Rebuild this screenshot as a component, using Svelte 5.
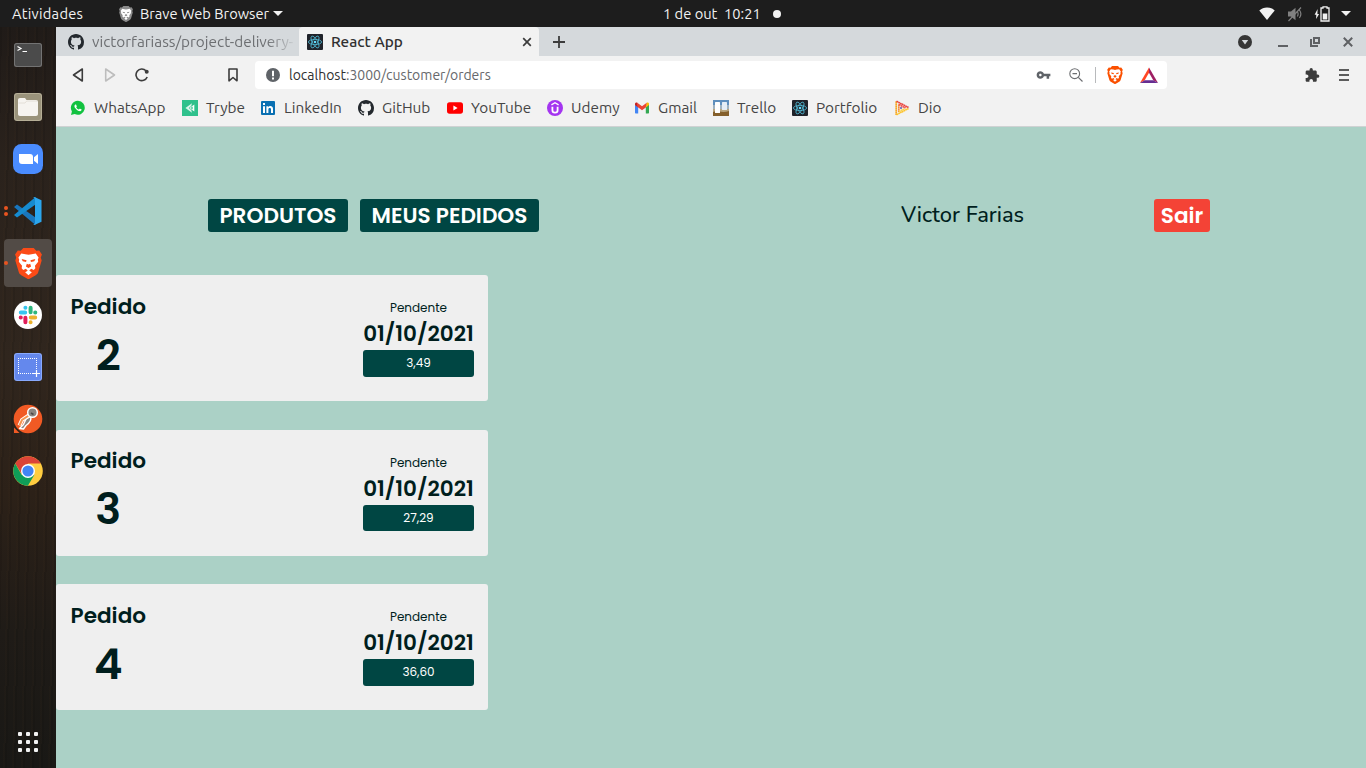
<script>
  const bookmarks = [
    { id: 'whatsapp', label: 'WhatsApp', width: 72 },
    { id: 'trybe', label: 'Trybe', width: 38 },
    { id: 'linkedin', label: 'LinkedIn', width: 58 },
    { id: 'github', label: 'GitHub', width: 49 },
    { id: 'youtube', label: 'YouTube', width: 60 },
    { id: 'udemy', label: 'Udemy', width: 47 },
    { id: 'gmail', label: 'Gmail', width: 39 },
    { id: 'trello', label: 'Trello', width: 39 },
    { id: 'react', label: 'Portfolio', width: 62 },
    { id: 'dio', label: 'Dio', width: 24 },
  ];

  const dock = [
    { id: 'terminal', windows: 0 },
    { id: 'files', windows: 0 },
    { id: 'zoom', windows: 0 },
    { id: 'vscode', windows: 2 },
    { id: 'brave', windows: 1, active: true },
    { id: 'slack', windows: 0 },
    { id: 'screenshot', windows: 0 },
    { id: 'postman', windows: 0 },
    { id: 'chrome', windows: 0 },
  ];

  const orders = [
    { id: 2, status: 'Pendente', date: '01/10/2021', total: '3,49' },
    { id: 3, status: 'Pendente', date: '01/10/2021', total: '27,29' },
    { id: 4, status: 'Pendente', date: '01/10/2021', total: '36,60' },
  ];

  const dots = [0, 1, 2, 3, 4, 5, 6, 7, 8];
</script>

{#snippet favicon(id)}
  <svg width="16" height="16" viewBox="0 0 16 16">
    {#if id === 'whatsapp'}
      <path d="M8 .8a7 7 0 0 0-6.1 10.6L1 15l3.7-.9A7 7 0 1 0 8 .8z" fill="#12c240" />
      <g transform="translate(.9 .8) scale(.59)"><path fill="#fff" d="M17.472 14.382c-.297-.149-1.758-.867-2.03-.967-.273-.099-.471-.148-.67.15-.197.297-.767.966-.94 1.164-.173.199-.347.223-.644.075-.297-.15-1.255-.463-2.39-1.475-.883-.788-1.48-1.761-1.653-2.059-.173-.297-.018-.458.13-.606.134-.133.298-.347.446-.52.149-.174.198-.298.298-.497.099-.198.05-.371-.025-.52-.075-.149-.669-1.612-.916-2.207-.242-.579-.487-.5-.669-.51-.173-.008-.371-.01-.57-.01-.198 0-.52.074-.792.372-.272.297-1.04 1.016-1.04 2.479 0 1.462 1.065 2.875 1.213 3.074.149.198 2.096 3.2 5.077 4.487.709.306 1.262.489 1.694.625.712.227 1.36.195 1.871.118.571-.085 1.758-.719 2.006-1.413.248-.694.248-1.289.173-1.413-.074-.124-.272-.198-.57-.347" /></g>
    {:else if id === 'trybe'}
      <rect width="16" height="16" fill="#2fc18c" />
      <path d="M3.400 8 10 3.200 9.200 6 6.800 8l2.400 2 .8 2.800z" fill="#d9f4ea" />
      <path d="M7.500 8 12.300 4.400v7.200z" fill="#fff" />
      <path d="m8.600 8 2-1.500v3z" fill="#2fc18c" />
    {:else if id === 'linkedin'}
      <rect x="1" y="1" width="14" height="14" rx="1" fill="#0a70b2" />
      <path d="M3 6.200h2V13H3zM3 3h2v2H3zM6.400 6.200h1.900v1c.9-1.700 4.700-1.800 4.700 1.600V13h-2V9.400c0-2-2.600-1.800-2.600 0V13h-2z" fill="#fff" />
    {:else if id === 'github'}
      <path fill="#24292e" fill-rule="evenodd" d="M8 0C3.58 0 0 3.58 0 8c0 3.54 2.29 6.53 5.47 7.59.4.07.55-.17.55-.38 0-.19-.01-.82-.01-1.49-2.01.37-2.53-.49-2.69-.94-.09-.23-.48-.94-.82-1.13-.28-.15-.68-.52-.01-.53.63-.01 1.08.58 1.23.82.72 1.21 1.87.87 2.33.66.07-.52.28-.87.51-1.07-1.78-.2-3.64-.89-3.64-3.95 0-.87.31-1.59.82-2.15-.08-.2-.36-1.02.08-2.12 0 0 .67-.21 2.2.82.64-.18 1.32-.27 2-.27s1.36.09 2 .27c1.53-1.04 2.2-.82 2.2-.82.44 1.1.16 1.92.08 2.12.51.56.82 1.27.82 2.15 0 3.07-1.87 3.75-3.65 3.95.29.25.54.73.54 1.48 0 1.07-.01 1.93-.01 2.2 0 .21.15.46.55.38A8.01 8.01 0 0 0 16 8c0-4.42-3.58-8-8-8z" />
    {:else if id === 'youtube'}
      <rect y="2.300" width="16" height="11.400" rx="2.600" fill="#f00" />
      <path d="M6.400 5.600v4.800L10.600 8z" fill="#fff" />
    {:else if id === 'udemy'}
      <circle cx="8" cy="8" r="8" fill="#a435f0" />
      <path d="M5.400 6.800v3.400c0 3.200 5.200 3.200 5.200 0V6.800" fill="none" stroke="#fff" stroke-width="1.800" />
      <path d="M4.400 4.800 8 2.700l3.600 2.100" fill="none" stroke="#fff" stroke-width="1.400" />
    {:else if id === 'gmail'}
      <path d="M1 4v8.500c0 .6.400 1 1 1h2.200V6.800z" fill="#4285f4" />
      <path d="M15 4v8.500c0 .6-.4 1-1 1h-2.200V6.800z" fill="#34a853" />
      <path d="M1 5V4c0-1.500 1.500-1.900 2.600-1.100L4.200 7.500z" fill="#c5221f" />
      <path d="M15 5V4c0-1.500-1.500-1.900-2.600-1.100l-.6 4.600z" fill="#fbbc04" />
      <path d="M3.300 2.800 8 6.300l4.700-3.500-.9 4.600L8 10.300 3.300 6.800z" fill="#ea4335" />
    {:else if id === 'trello'}
      <rect width="16" height="16" fill="#b7a47e" />
      <rect width="16" height="5" fill="#5f8fbd" />
      <rect y="5" width="16" height="4" fill="#9fb2c0" />
      <path d="M0 12c4-2 9 1.500 16-1v5H0z" fill="#85602c" />
      <rect x="2" y="2" width="5" height="11" rx=".5" fill="#fff" />
      <rect x="9" y="2" width="5" height="8" rx=".5" fill="#e5edf5" />
    {:else if id === 'react'}
      <rect width="16" height="16" rx="1" fill="#20232a" />
      <g fill="none" stroke="#4fb5cf" stroke-width=".85">
        <ellipse cx="8" cy="8" rx="6.600" ry="2.600" />
        <ellipse cx="8" cy="8" rx="6.600" ry="2.600" transform="rotate(60 8 8)" />
        <ellipse cx="8" cy="8" rx="6.600" ry="2.600" transform="rotate(120 8 8)" />
      </g>
      <circle cx="8" cy="8" r="1.300" fill="#61dafb" />
    {:else if id === 'dio'}
      <g fill="none" stroke-width="1.700" stroke-dasharray="1.700 .3">
        <path d="M2.200 15V1" stroke="#f5a623" />
        <path d="m2.500 1.300 12 6.200" stroke="#e8413b" />
        <path d="m2.500 14.700 12-6.200" stroke="#fdc32d" />
        <path d="M4.800 12V4" stroke="#f58b3c" />
        <path d="m5 4.500 6.500 3.500" stroke="#f0524f" />
        <path d="m5 11.800 5.500-3" stroke="#fbd14b" />
      </g>
      <circle cx="7" cy="8" r="1" fill="#5b59a8" />
    {/if}
  </svg>
{/snippet}

{#snippet lion(size, shield, face)}
  <svg width={size} height={size} viewBox="0 0 24 24">
    <path d="M8 0h8l2 2.200 2.300-.2L22.400 5l-.9 2.400.7 2.200-2.700 9.100c-.3 1-1 1.700-1.900 2.300L12 24.300 6.400 21c-.9-.6-1.600-1.300-1.900-2.300L1.800 9.600l.7-2.200L1.600 5l2.100-3L6 2.200z" fill={shield} />
    <path d="m12 5.300 2.400-.5 3.200-.5 2.200 3-.6 1.700.3 1.600-2.500 3.200.3 1.800-1.200 1.500-2.100-1-1.400 1.500 2 1.200-2.600 2.200-2.600-2.200 2-1.200L10 16.100l-2.100 1-1.200-1.500.3-1.800-2.500-3.200.3-1.600-.6-1.700 2.200-3 3.200.5z" fill={face} />
    <path d="m6.700 8.600 3.800.8-.4 1.500-2.600-.6zM17.300 8.600l-3.800.8.4 1.500 2.600-.6zM10.700 12.200 10 14.300l2 1.200 2-1.200-.7-2.100-1.300.5z" fill={shield} />
  </svg>
{/snippet}

{#snippet dockIcon(id)}
  <svg width="32" height="32" viewBox="0 0 32 32">
    {#if id === 'terminal'}
      <rect x="2" y="4" width="28" height="24" rx="2.500" fill="#737373" />
      <rect x="3" y="5" width="26" height="22" rx="2" fill="#4b4b4b" />
      <path d="m5.500 7.500 3.500 2-3.500 2M10.500 12.500h4.500" fill="none" stroke="#fff" stroke-width="1.200" />
    {:else if id === 'files'}
      <rect x="2" y="2" width="28" height="28" rx="3" fill="#b6af97" />
      <rect x="3" y="3" width="26" height="26" rx="2.500" fill="#9a937b" />
      <path d="M6 9c0-1.300.8-2 2-2h5l1.500 2H24c1.200 0 2 .8 2 2v12c0 1.200-.8 2-2 2H8c-1.200 0-2-.8-2-2z" fill="#f6f4f0" />
      <path d="M6.500 12H13l1.700-2H25.500" fill="none" stroke="#dfdbd1" stroke-width=".8" />
    {:else if id === 'zoom'}
      <rect x="1" y="1" width="30" height="30" rx="8.500" fill="#4a8cff" />
      <path d="M7 11h11c2 0 3 1.200 3 3v7H10c-2 0-3-1.200-3-3z" fill="#fff" />
      <path d="m22 14.300 4-3.300v10l-4-3.300z" fill="#fff" />
    {:else if id === 'vscode'}
      <path d="m2 12 3-2.500 18.500 13V30z" fill="#1976bd" />
      <path d="m2 20 3 2.500 18.500-13V2z" fill="#168bd0" />
      <path d="m22.500 2 7 3.200v21.600l-7 3.200-1.300-.8 1.800-.8V3.600l-1.800-.8z" fill="#2aa6ee" />
    {:else if id === 'slack'}
      <circle cx="16" cy="16" r="14" fill="#fff" />
      <g fill="none" stroke-width="4" stroke-linecap="round">
        <path d="M8.800 13.400h4.400M13.400 8.700v.1" stroke="#36c5f0" />
        <path d="M18.600 8.800v4.400M23.300 13.400h-.1" stroke="#2eb67d" />
        <path d="M23.200 18.600h-4.400M18.600 23.300v-.1" stroke="#ecb22e" />
        <path d="M13.400 23.200v-4.400M8.700 18.600h.1" stroke="#e01e5a" />
      </g>
    {:else if id === 'screenshot'}
      <rect x="2" y="2" width="28" height="28" rx="3" fill="#88a9fc" />
      <rect x="3" y="3" width="26" height="26" rx="2.500" fill="#6488ed" />
      <path d="M6 7.500h19M6 22.500h15" stroke="#fff" stroke-dasharray="1 1" />
      <path d="M6.500 9v13M24.500 9v9" stroke="#fff" stroke-dasharray="1 1" />
      <path d="M24.500 19v7M21 22.500h7" stroke="#fff" stroke-width="1.200" />
    {:else if id === 'postman'}
      <circle cx="16" cy="16" r="14.300" fill="#f15a24" />
      <path d="M2 24.500 7.500 30H2z" fill="#f15a24" />
      <path d="M18.500 13.500c1.500 4-1 6.500-4.500 9L11.500 26 7.500 25.500l4-4L14 16z" fill="#8d8781" stroke="#fff" stroke-width="1.400" stroke-linejoin="round" />
      <path d="m17.500 12-7.500 5-2.500 5.500" fill="none" stroke="#fff" stroke-width="4" />
      <path d="m17.500 12-7.500 5-2.500 5.500" fill="none" stroke="#f5954e" stroke-width="2" />
      <circle cx="20.500" cy="9.500" r="4.800" fill="#8b8580" stroke="#fff" stroke-width="1.500" />
      <path d="m19 10 2.500 1.500" stroke="#4e4a47" stroke-width="1.500" />
    {:else if id === 'chrome'}
      <circle cx="16" cy="16" r="14.800" fill="#ffcd40" />
      <path d="M3.200 8.600A14.800 14.800 0 0 1 28.800 8.600H16L10 19.400z" fill="#db4437" />
      <path d="M3.200 8.600A14.800 14.800 0 0 0 15.900 30.800L22.400 19.700H9.600z" fill="#0f9d58" />
      <circle cx="16" cy="16" r="7" fill="#fff" />
      <circle cx="16" cy="16" r="5.600" fill="#4285f4" />
    {/if}
  </svg>
{/snippet}

<div class="screen">
  <header class="topbar">
    <div class="top-left">
      <span class="activities">Atividades</span>
      <span class="app-menu">
        {@render lion(16, '#8b8b8b', '#fff')}
        <span class="app-name">Brave Web Browser</span>
        <svg width="10" height="5" viewBox="0 0 10 5"><path d="M0 0h10L5 5z" fill="#f2f2f2" /></svg>
      </span>
    </div>
    <div class="clock"><span>1 de out&nbsp; 10:21</span><i></i></div>
    <div class="tray">
      <svg width="16" height="14" viewBox="0 0 16 14"><path d="M.3 3.400C4.500-.5 11.500-.5 15.700 3.400L8 13z" fill="#f2f2f2" /></svg>
      <svg width="16" height="16" viewBox="0 0 16 16"><path d="M1 5.500h3L8.500 1.800v12.400L4 10.500H1z" fill="#818181" /><path d="M10.300 5.500c1 1.500 1 3.500 0 5M12.400 4c1.800 2.500 1.800 5.600 0 8M1.500 15 14 1.500" fill="none" stroke="#818181" stroke-width="1.200" /></svg>
      <svg width="16" height="16" viewBox="0 0 16 16"><path d="M3.600 3 .6 8.700h1.700L2.100 13l3-5H3.400z" fill="#f2f2f2" /><path d="M7 2h2V.9h4V2h2v13H7z" fill="none" stroke="#f2f2f2" stroke-width="1.300" /><path d="M8.700 7.500h4.600v6H8.700z" fill="#f2f2f2" /></svg>
      <svg width="10" height="5" viewBox="0 0 10 5"><path d="M0 0h10L5 5z" fill="#f2f2f2" /></svg>
    </div>
  </header>

  <div class="desktop">
    <aside class="dock">
      {#each dock as app (app.id)}
        <div class="dock-item" class:active={app.active}>
          <span class="marks">
            {#each dots.slice(0, app.windows) as d (d)}<i></i>{/each}
          </span>
          {#if app.id === 'brave'}
            {@render lion(31, '#fb4b17', '#fff')}
          {:else}
            {@render dockIcon(app.id)}
          {/if}
        </div>
      {/each}
      <div class="launcher">
        {#each dots as d (d)}<i></i>{/each}
      </div>
    </aside>

    <main class="browser">
      <div class="tabs">
        <div class="tab">
          {@render favicon('github')}
          <span class="tab-title fade">victorfariass/project-delivery-</span>
        </div>
        <div class="tab current">
          {@render favicon('react')}
          <span class="tab-title">React App</span>
          <svg width="10" height="10" viewBox="0 0 10 10"><path d="m1.200 1.200 7.600 7.600M8.800 1.200 1.200 8.800" stroke="#3c3c3c" stroke-width="1.700" /></svg>
        </div>
        <svg class="new-tab" width="12" height="12" viewBox="0 0 12 12"><path d="M6 0v12M0 6h12" stroke="#3c3c3c" stroke-width="1.800" /></svg>
        <div class="window-controls">
          <svg width="14" height="14" viewBox="0 0 14 14"><circle cx="7" cy="7" r="7" fill="#363636" /><path d="M3.800 5h6.400L7 9.500z" fill="#d5d9dc" /></svg>
          <svg width="10" height="14" viewBox="0 0 10 14"><path d="M0 11h10" stroke="#5f6164" stroke-width="2" /></svg>
          <svg width="10" height="10" viewBox="0 0 10 10"><path d="M4 1h5v5H4zM1 2v7h7" fill="none" stroke="#5f6164" stroke-width="2" /></svg>
          <svg width="10" height="10" viewBox="0 0 10 10"><path d="m.8.8 8.400 8.400M9.200.8.8 9.200" stroke="#5f6164" stroke-width="2" /></svg>
        </div>
      </div>

      <div class="toolbar">
        <div class="nav-icons">
          <svg width="12" height="14" viewBox="0 0 12 14"><path d="M10.300 1v12L1.500 7z" fill="none" stroke="#3c3c3c" stroke-width="1.600" stroke-linejoin="round" /></svg>
          <svg width="12" height="14" viewBox="0 0 12 14"><path d="M1.700 1v12L10.500 7z" fill="none" stroke="#bdbdbd" stroke-width="1.600" stroke-linejoin="round" /></svg>
          <svg class="reload" width="14" height="14" viewBox="0 0 14 14"><path d="M12.200 9A5.800 5.800 0 1 1 11 2.800" fill="none" stroke="#3c3c3c" stroke-width="1.600" /><circle cx="11.700" cy="3.700" r="2" fill="#3c3c3c" /></svg>
          <svg class="save" width="10" height="14" viewBox="0 0 10 14"><path d="M1 1h8v11.800L5 9.500l-4 3.300z" fill="none" stroke="#3c3c3c" stroke-width="1.600" stroke-linejoin="round" /></svg>
        </div>
        <div class="address">
          <svg width="14" height="14" viewBox="0 0 14 14"><circle cx="7" cy="7" r="7" fill="#5f6368" /><path d="M7 2.800v5.400M7 9.500v2" stroke="#fff" stroke-width="2" /></svg>
          <span class="url"><b>localhost</b>:3000/customer/orders</span>
          <div class="address-tools">
            <svg width="15" height="15" viewBox="0 1 24 24"><path fill="#5f6368" d="M12.650 10C11.830 7.670 9.610 6 7 6c-3.310 0-6 2.690-6 6s2.690 6 6 6c2.610 0 4.830-1.670 5.650-4H17v4h4v-4h2v-4H12.650zM7 14c-1.100 0-2-.9-2-2s.9-2 2-2 2 .9 2 2-.9 2-2 2z" /></svg>
            <svg width="14" height="14" viewBox="0 0 14 14"><circle cx="5.700" cy="5.700" r="4.900" fill="none" stroke="#6d6f72" stroke-width="1.100" /><path d="M3.500 5.700H8M9.300 9.300l4.200 4.200" stroke="#6d6f72" stroke-width="1.200" /></svg>
            <i class="divider"></i>
            {@render lion(18, '#fb5000', '#fff')}
            <svg width="18" height="16" viewBox="0 0 18 16"><path d="M9 .5 0 16l4.700-2.700L9 5.800z" fill="#ff4724" /><path d="m9 .5 9 15.500-4.700-2.700L9 5.800z" fill="#9e1f63" /><path d="M0 16h18l-4.700-2.700H4.700z" fill="#662d91" /></svg>
          </div>
        </div>
        <div class="toolbar-end">
          <svg width="15" height="15" viewBox="1 1 23 23"><path fill="#3c3c3c" d="M20.500 11H19V7c0-1.100-.9-2-2-2h-4V3.500a2.500 2.500 0 0 0-5 0V5H4c-1.100 0-1.990.9-1.990 2v3.800H3.500c1.490 0 2.700 1.210 2.700 2.700s-1.210 2.700-2.700 2.700H2V20c0 1.100.9 2 2 2h3.800v-1.500c0-1.490 1.210-2.700 2.700-2.700s2.700 1.210 2.700 2.700V22H17c1.100 0 2-.9 2-2v-4h1.500a2.500 2.500 0 0 0 0-5z" /></svg>
          <svg width="10" height="12" viewBox="0 0 10 12"><path d="M0 1h10M0 6h10M0 11h10" stroke="#5c5c5c" stroke-width="2" /></svg>
        </div>
      </div>

      <nav class="bookmarks">
        {#each bookmarks as mark (mark.id)}
          <a href="#{mark.id}">
            {@render favicon(mark.id)}
            <span style:width="{mark.width}px">{mark.label}</span>
          </a>
        {/each}
      </nav>

      <section class="page">
        <div class="page-header">
          <button class="nav-button products">PRODUTOS</button>
          <button class="nav-button my-orders">MEUS PEDIDOS</button>
          <span class="user">Victor Farias</span>
          <button class="nav-button logout">Sair</button>
        </div>
        <div class="orders">
          {#each orders as order (order.id)}
            <article class="order">
              <div class="order-id">
                <span class="caption">Pedido</span>
                <span class="number">{order.id}</span>
              </div>
              <div class="order-info">
                <span class="status">{order.status}</span>
                <span class="date">{order.date}</span>
                <span class="total">{order.total}</span>
              </div>
            </article>
          {/each}
        </div>
      </section>
    </main>
  </div>
</div>

<style>
  :global(body) {
    margin: 0;
    overflow: hidden;
  }
  svg {
    display: block;
    flex: none;
  }
  .screen {
    width: 1366px;
    height: 768px;
    display: flex;
    flex-direction: column;
    overflow: hidden;
    font-family: Ubuntu, 'Open Sans', sans-serif;
    font-size: 15.333px;
    white-space: nowrap;
  }

  .topbar {
    height: 27px;
    flex: none;
    display: grid;
    grid-template-columns: 663px 1fr auto;
    align-items: center;
    background: #1d1d1d;
    color: #f2f2f2;
    font-size: 14.667px;
  }
  .top-left,
  .app-menu,
  .clock,
  .tray {
    display: flex;
    align-items: center;
  }
  .activities {
    width: 106px;
    padding-left: 12px;
    letter-spacing: 0.250px;
  }
  .app-menu {
    gap: 5px;
  }
  .app-name {
    width: 128px;
    margin-left: 1px;
  }
  .clock span {
    width: 110px;
  }
  .clock i {
    width: 8px;
    height: 8px;
    border-radius: 50%;
    background: #f2f2f2;
  }
  .tray {
    gap: 12px;
    padding-right: 15px;
  }
  .tray svg:nth-child(3) {
    margin-right: -1px;
  }
  .tray svg:nth-child(2) {
    margin-right: -1px;
  }

  .desktop {
    flex: 1;
    display: flex;
    min-height: 0;
  }
  .dock {
    width: 56px;
    flex: none;
    display: flex;
    flex-direction: column;
    gap: 4px;
    padding: 4px;
    box-sizing: border-box;
    background:
      repeating-linear-gradient(91deg, rgba(0, 0, 0, 0.09) 0 2px, transparent 2px 7px, rgba(90, 60, 30, 0.05) 7px 9px),
      linear-gradient(#201b18, #2a221c 18%, #30261e 45%, #2c2118 63%, #1f1b17 82%, #191815);
  }
  .dock-item {
    position: relative;
    width: 48px;
    height: 48px;
    border-radius: 4px;
    display: flex;
    align-items: center;
    justify-content: center;
  }
  .dock-item.active {
    background: #524b46;
  }
  .marks {
    position: absolute;
    left: 0;
    top: 0;
    height: 100%;
    display: flex;
    flex-direction: column;
    justify-content: center;
    gap: 2px;
  }
  .marks i {
    width: 4px;
    height: 4px;
    border-radius: 50%;
    background: #e95420;
  }
  .launcher {
    margin: auto auto 12px;
    display: grid;
    grid-template-columns: repeat(3, 4px);
    gap: 4px;
  }
  .launcher i {
    height: 4px;
    border-radius: 1px;
    background: #f2f2f2;
  }

  .browser {
    flex: 1;
    min-width: 0;
    display: flex;
    flex-direction: column;
    background: #f2f2f2;
  }
  .tabs {
    height: 29px;
    flex: none;
    display: flex;
    align-items: center;
    background: #d5d9dc;
    color: #6d6f72;
  }
  .tab {
    width: 243px;
    height: 29px;
    box-sizing: border-box;
    padding-left: 12px;
    display: flex;
    align-items: center;
    gap: 8px;
  }
  .tab-title {
    flex: 1;
    overflow: hidden;
  }
  .fade {
    -webkit-mask-image: linear-gradient(90deg, #000 86%, transparent 101%);
    mask-image: linear-gradient(90deg, #000 86%, transparent 101%);
    margin-right: 4px;
  }
  .tab.current {
    width: 240px;
    padding: 0 7px 0 8px;
    border-radius: 4px 4px 0 0;
    background: #f2f2f2;
    color: #303030;
    font-weight: 500;
  }
  .new-tab {
    margin-left: 14px;
  }
  .window-controls {
    margin-left: auto;
    padding-right: 13px;
    display: flex;
    align-items: center;
  }
  .window-controls svg:nth-child(2) {
    margin-left: 26px;
  }
  .window-controls svg:nth-child(3) {
    margin-left: 22px;
  }
  .window-controls svg:nth-child(4) {
    margin-left: 23px;
  }

  .toolbar {
    height: 38px;
    flex: none;
    display: flex;
    align-items: center;
  }
  .nav-icons {
    width: 199px;
    display: flex;
    align-items: center;
    gap: 20px;
    padding-left: 16px;
    box-sizing: border-box;
  }
  .reload {
    margin-left: -1px;
  }
  .save {
    margin-left: 59px;
  }
  .address {
    width: 912px;
    height: 28px;
    padding: 0 9px 0 11px;
    box-sizing: border-box;
    border-radius: 4px;
    display: flex;
    align-items: center;
    gap: 9px;
    background: #fff;
    color: #66686b;
    font-size: 14px;
  }
  .url b {
    font-weight: 400;
    color: #303030;
  }
  .address-tools {
    margin-left: auto;
    display: flex;
    align-items: center;
  }
  .address-tools svg:nth-child(2) {
    margin-left: 18px;
  }
  .divider {
    width: 1px;
    height: 16px;
    margin: 0 10px 0 12px;
    background: #b8babc;
  }
  .address-tools svg:last-child {
    margin-left: 16px;
  }
  .toolbar-end {
    margin-left: auto;
    display: flex;
    align-items: center;
    gap: 19px;
    padding-right: 17px;
  }

  .bookmarks {
    height: 33px;
    flex: none;
    box-sizing: border-box;
    padding: 0 0 5px 14px;
    display: flex;
    align-items: center;
    gap: 16px;
    border-bottom: 1px solid #cfd2d3;
  }
  .bookmarks a {
    display: flex;
    align-items: center;
    gap: 8px;
    color: #454545;
    text-decoration: none;
  }

  .page {
    flex: 1;
    background: #abd1c6;
    font-family: Poppins, Inter, sans-serif;
    color: #001e1d;
  }
  .page-header {
    height: 33px;
    margin: 72px 0 43.400px;
    padding-left: 152px;
    display: flex;
    align-items: center;
  }
  .nav-button {
    height: 33px;
    padding: 0;
    border: 0;
    border-radius: 3px;
    background: #004643;
    color: #fffffe;
    font: 600 21.600px/33px Poppins, Inter, sans-serif;
  }
  .products {
    width: 140px;
  }
  .my-orders {
    width: 179px;
    margin-left: 12px;
  }
  .user {
    width: 253px;
    margin: -2px 0 0 362px;
    font: 500 21.800px/30px Nunito, Lato, sans-serif;
  }
  .logout {
    width: 56px;
    background: #f44336;
  }
  .orders {
    display: flex;
    flex-direction: column;
    gap: 28.400px;
  }
  .order {
    width: 432px;
    height: 126px;
    box-sizing: border-box;
    padding: 0 14px;
    display: flex;
    justify-content: space-between;
    border-radius: 3px;
    background: #efefef;
  }
  .order-id,
  .order-info {
    display: flex;
    flex-direction: column;
    align-items: center;
  }
  .order-id {
    width: 76.600px;
    padding-top: 19.400px;
    gap: 14px;
  }
  .caption {
    font-size: 21.600px;
    line-height: 24px;
    font-weight: 600;
  }
  .number {
    font-size: 43.200px;
    line-height: 44px;
    font-weight: 600;
  }
  .order-info {
    width: 111px;
    padding-top: 25px;
  }
  .status {
    font-size: 12px;
    line-height: 16px;
  }
  .date {
    margin: 6px 0 4px;
    font-size: 21.500px;
    line-height: 24px;
    font-weight: 600;
  }
  .total {
    width: 111px;
    height: 26.600px;
    border-radius: 3px;
    background: #004643;
    color: #fffffe;
    font-size: 12px;
    line-height: 26.600px;
    text-align: center;
  }
</style>
